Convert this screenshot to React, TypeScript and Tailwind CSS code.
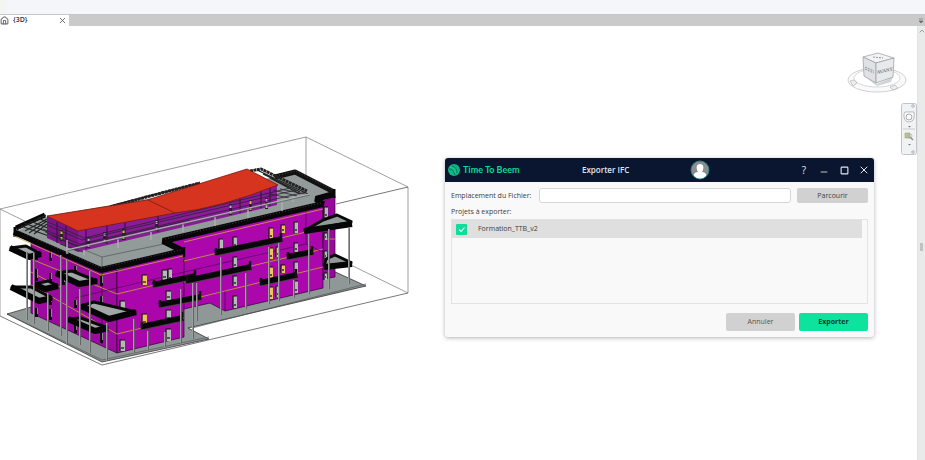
import { ChevronUp, House, Minus, Square, X } from "lucide-react";

const windowButton = "flex h-4 w-5 items-center justify-center text-gray-200";

// left, front, right and back corners of each corner balcony
const cornerBalconies = [
  "10,248 29,257 41,254 26,246",
  "11,287 39,301 52,298 31,287",
  "34,284 45,289 58,286 48,281",
  "56,273 79,284 97,281 72,271",
  "68,319 95,331 108,328 81,318",
  "81,306 109,319 136,312 94,302",
];

// railings on the far right corner
const sideRailings = [
  ["304,231 323,220 337,215 352,222", "304,231 352,224"],
  ["324,266 326,259 335,255 352,263", "324,267 352,264"],
];

// straight balconies on the long facade
const facadeBalconies = [
  [153, 285, 196, 276],
  [159, 305, 201, 297],
  [141, 327, 183, 318],
  [215, 253, 282, 239],
  [186, 281, 251, 267],
  [260, 283, 297, 275],
  [287, 257, 313, 252],
];

const columns = [
  [27, 249, 320], [34, 250, 324], [48, 290, 331], [61, 252, 336], [67, 256, 344],
  [80, 286, 345], [90, 268, 353], [107, 320, 361], [134, 316, 353], [148, 328, 350],
  [165, 329, 347], [181, 286, 343], [193, 280, 339], [197, 280, 321], [221, 254, 315],
  [246, 270, 309], [269, 244, 304], [279, 240, 301], [294, 277, 298], [309, 231, 294],
  [329, 226, 289], [349, 225, 284],
];

const windows = [
  [142, 275, 5, 10, "y"], [120, 301, 5, 12, "g"], [142, 314, 5, 11, "y"], [120, 340, 5, 11, "g"],
  [162, 270, 5, 10, "g"], [168, 269, 4, 12, "g"], [166, 291, 5, 9, "g"], [166, 310, 5, 11, "g"],
  [166, 329, 5, 12, "g"], [219, 239, 4, 13, "g"], [233, 237, 4, 11, "g"], [233, 257, 4, 11, "g"],
  [233, 276, 4, 10, "g"], [233, 296, 4, 12, "g"], [269, 228, 4, 11, "y"], [281, 225, 4, 8, "y"],
  [294, 222, 4, 11, "g"], [269, 248, 4, 11, "y"], [276, 247, 3, 10, "y"], [294, 243, 4, 9, "g"],
  [269, 267, 4, 11, "y"], [281, 265, 4, 8, "y"], [294, 262, 4, 11, "g"], [269, 287, 4, 12, "y"],
  [276, 286, 3, 11, "g"], [294, 281, 4, 12, "g"], [324, 207, 4, 11, "g"], [324, 233, 3, 7, "g"],
  [324, 251, 3, 8, "g"], [324, 273, 3, 7, "g"],
];

const sideWindows = [
  [35, 250, 10], [49, 252, 9], [35, 269, 12], [49, 273, 9], [49, 295, 10], [35, 308, 9],
  [49, 309, 11], [62, 276, 9], [74, 300, 8], [74, 324, 9], [100, 276, 10], [100, 296, 9],
  [100, 333, 10], [74, 266, 7],
];

const roofWindows = [
  [60, 230], [87, 237], [103, 232], [122, 229], [155, 220], [229, 204], [249, 200], [265, 198],
];

function Building() {
  return (
    <svg
      viewBox="0 132 412 238"
      className="block w-[412px] shrink-0"
      fill="none"
      role="img"
      aria-label="3D"
    >
      {/* back of the section box */}
      <path d="M0 209 306 137 408 187V293M306 137V243L408 293M0 209V316M0 209 102 259" stroke="#777" strokeWidth=".7" />

      {/* ground slab */}
      <path d="M7 314 102 362 209 339 188 328 366 286 320 265 90 290Z" fill="#8f9797" stroke="#222" strokeWidth=".7" />
      <path d="M7 314 102 360 209 337M192 328 366 284" stroke="#555" strokeWidth=".7" />

      {/* walls */}
      <path d="M31 236 117 270V353L31 313Z" fill="#9c0a9f" stroke="#300033" strokeWidth=".7" />
      <path d="M117 270 184 250V337L117 353Z" fill="#aa06ac" stroke="#300033" strokeWidth=".7" />
      <path d="M162 242 323 202V288L225 311 210 303 184 309V252Z" fill="#ab07ad" stroke="#300033" strokeWidth=".7" />
      <path d="M323 201 335 196V277L323 279Z" fill="#99089d" stroke="#300033" strokeWidth=".7" />
      <path d="M225 311V290M306 209V244M102 273V344" stroke="#46004a" strokeWidth=".7" />

      {/* floor lines */}
      <path
        d="M31 259 117 294 184 278M31 285 117 334 184 318M31 272 60 287M184 261 323 228M184 282 323 249M184 301 323 267M323 239H335M323 263 335 260"
        stroke="#b98b42"
        strokeWidth="1"
      />
      <path d="M75 298 184 272 306 244 335 258" stroke="#46004a" strokeWidth=".6" />

      {sideWindows.map(([x, y, h]) => (
        <g key={`${x}-${y}`}>
          <rect x={x} y={y} width="3" height={h} fill="#160018" />
          <path d={`M${x + 2.5} ${y}v${h - 3}`} stroke="#a1a8a4" strokeWidth=".8" />
        </g>
      ))}
      {windows.map(([x, y, w, h, tone]) => (
        <g key={`${x}-${y}`}>
          <rect x={x} y={y} width={w} height={h} fill={tone === "y" ? "#efc35b" : "#b3bbb7"} />
          <path d={`M${x} ${Number(y) + Number(h)}V${y}H${Number(x) + Number(w)}`} stroke="#180019" strokeWidth="1.2" />
          <path d={`M${Number(x) + 1} ${Number(y) + Number(h) - 3}h${Number(w) - 2}`} stroke="#292929" strokeWidth="1.4" />
        </g>
      ))}

      {/* roof terrace and parapet */}
      <path d="M17 231 100 270 183 250 162 242 322 201 333 193 294 174 48 216Z" fill="#929b9a" />
      <path d="M102 257 178 241M102 257V268M70 244 102 257" stroke="#555" strokeWidth=".7" />
      <path d="M16 228 45 215" stroke="#070707" strokeWidth="5" />
      <path d="M14 232 101 270 183 251 163 241 323 204 316 199 334 194" stroke="#070707" strokeWidth="6" strokeLinejoin="bevel" />
      <path d="M15 227V237" stroke="#070707" strokeWidth="3" />
      <path d="M184 247V257" stroke="#070707" strokeWidth="2.5" />
      <path d="M275 177 295 172 334 192" stroke="#111" strokeWidth="5" strokeLinejoin="bevel" />
      <path d="M334 189V198" stroke="#080808" strokeWidth="3" />
      <path d="M14 236 101 275 183 256M184 242 323 209" stroke="#c9a83d" strokeWidth=".8" />
      <path d="M16 230 101 268 181 250M165 239 321 203M276 176 295 171 333 190" stroke="#666" strokeWidth=".6" strokeDasharray="1 2" />

      {/* truss behind the roof */}
      <path d="M18 229 46 215M25 231 47 219M21 226 60 240M30 221 68 236M38 218 54 225M24 223 64 238M34 234 47 224M29 233 47 221M110 206 200 183M257 170 308 194M263 174 300 192M270 178 300 194" stroke="#222" strokeWidth="1.3" />
      <path d="M114 206 150 196 200 183M250 171 261 169 307 191" stroke="#222" strokeWidth="3" strokeDasharray="3 .5" />

      {/* top storey */}
      <path d="M47 216 78 230V252L47 238Z" fill="#7d1389" />
      <path d="M78 230 277 185V205L78 252Z" fill="#8b1b98" />
      <path d="M57 222V243M66 226V247M86 230V249M107 225V244M125 221V240M158 214V232M240 193V213M261 189V208M270 187V206" stroke="#3a0742" strokeWidth="1" />
      {roofWindows.map(([x, y]) => (
        <g key={x}>
          <rect x={x} y={y} width="3" height="11" fill="#252125" />
          <path d={`M${x + 1.5} ${y + 1}v3m0 3v3`} stroke={x === 122 || x === 249 || x === 60 ? "#e4b94d" : "#b4beb9"} strokeWidth="2" />
        </g>
      ))}

      {/* pergola */}
      <path
        d="M43 229 80 244 306 192M45 232 80 247M47 225 82 240 296 190M48 222 84 238 290 188M52 236 76 246 190 220M60 244 83 252M280 189 305 194M273 190 297 196M265 193 289 198"
        stroke="#282331"
        strokeWidth=".8"
      />
      <path d="M67 250 310 194M84 250V255M118 239V248M151 232V240M183 224V232M215 217V226M248 209V218M282 201V211M293 196V202M67 240V254" stroke="#a9b0ad" strokeWidth="1.5" />
      <path d="M67 251 310 195" stroke="#44464a" strokeWidth=".6" />

      {/* red roof */}
      <path d="M47 216 147 200 247 169 278 185Q220 208 175 213L78 231Z" fill="#d6341f" stroke="#721910" strokeWidth=".8" />
      <path d="M148 200 175 213" stroke="#6a2015" strokeWidth=".8" />

      {cornerBalconies.map((points) => (
        <g key={points}>
          <polygon points={points} fill="#a0a7a4" stroke="#090909" strokeWidth="3" strokeLinejoin="bevel" />
          <polyline points={points.split(" ").slice(0, 3).join(" ")} stroke="#050505" strokeWidth="6" strokeLinejoin="bevel" />
        </g>
      ))}
      {sideRailings.map(([rear, front]) => (
        <g key={rear}>
          <polygon points={rear} fill="#929b9a" stroke="#080808" strokeWidth="3" strokeLinejoin="bevel" />
          <polyline points={front} stroke="#060606" strokeWidth="6" />
        </g>
      ))}
      {facadeBalconies.map(([x1, y1, x2, y2]) => (
        <g key={`${x1}-${y1}`}>
          <path d={`M${x1} ${y1}L${x2} ${y2}`} stroke="#070707" strokeWidth="6" />
          <path d={`M${x1 + 1} ${y1 - 5}V${y1 + 2}M${x2 - 1} ${y2 - 6}V${y2 + 2}`} stroke="#111" strokeWidth="2.5" />
          <path d={`M${x1} ${y1 + 3}L${x2} ${y2 + 3}`} stroke="#555" strokeWidth=".7" />
        </g>
      ))}

      {columns.map(([x, top, bottom]) => (
        <g key={x}>
          <path d={`M${x} ${top + 3}V${bottom}`} stroke="#4c4c4c" strokeWidth="1.8" />
          <path d={`M${x - 0.3} ${top + 3}V${bottom}`} stroke="#adb2b0" strokeWidth="1" />
        </g>
      ))}

      {/* front of the section box */}
      <path d="M0 316 102 365 408 293M408 187 336 204" stroke="#555" strokeWidth=".8" />
    </svg>
  );
}

function ViewCube() {
  return (
    <svg viewBox="0 0 64 46" className="h-[46px] w-16" fill="none">
      <ellipse cx="31" cy="31" rx="29" ry="12" fill="#fafafa" stroke="#cfd1d3" strokeWidth="1" />
      <ellipse cx="31" cy="29" rx="23" ry="9" fill="#fff" stroke="#d7d9da" strokeWidth="1" />
      <path d="M19 28 31 35 47 28 45 33 31 37Z" fill="#d2d4d5" />
      <path d="M17 8 32 4 48 9 30 14Z" fill="#f2f3f4" stroke="#a3a6a8" strokeWidth=".8" />
      <path d="M17 8 30 14V34L18 27Z" fill="#dfe2e4" stroke="#a0a3a5" strokeWidth=".8" />
      <path d="M30 14 48 9 47 28 30 34Z" fill="#e7eaec" stroke="#a0a3a5" strokeWidth=".8" />
      <text x="31" y="25" fontSize="5" fontWeight="700" fill="#7d8285" fontFamily="Liberation Serif, serif" transform="rotate(-12 31 25)">AVANT</text>
      <path d="M19 18 28 22M19 20 28 24M27 8 37 9" stroke="#989c9f" strokeWidth="1.1" strokeDasharray="2 1" />
      <path d="M4 32 8 31 11 34 7 37ZM44 38 49 36 52 39 47 41Z" fill="#eee" stroke="#bbb" strokeWidth=".8" />
    </svg>
  );
}

function NavigationBar() {
  return (
    <svg viewBox="0 0 16 52" className="h-[52px] w-4" fill="none">
      <rect x=".5" y=".5" width="15" height="51" rx="2" fill="#f1f2f3" stroke="#c3c6c8" />
      <circle cx="12" cy="3" r="1.3" stroke="#999" strokeWidth=".7" />
      <path d="M4 9H13V15Q12 19 8 19T3 14V11Z" fill="#fff" stroke="#a5aaad" strokeWidth=".8" />
      <circle cx="8" cy="14" r="3" stroke="#9aa0a3" strokeWidth=".9" />
      <path d="M7 23H10L8.500 24.500ZM7 41H10L8.500 42.500Z" fill="#777" />
      <path d="M2 26H14" stroke="#ccc" />
      <path d="M4 30H9V35H4Z" fill="#b8c590" stroke="#98a66b" strokeWidth=".6" />
      <path d="M9 34 12 37" stroke="#888" strokeWidth="1.3" />
      <circle cx="9" cy="33" r="2" stroke="#aaa" strokeWidth=".7" />
      <circle cx="12" cy="49" r="1.3" stroke="#999" strokeWidth=".7" />
    </svg>
  );
}

function BeemLogo() {
  return (
    <svg viewBox="0 0 12 12" className="size-3 shrink-0" fill="none">
      <circle cx="6" cy="6" r="6" fill="#0fb485" />
      <path d="M1 5Q5 4 7 11M4 2Q9 3 9 9" stroke="#08745b" strokeWidth=".9" />
      <path d="M2 3Q6 3 8 9" stroke="#21d99c" strokeWidth=".7" />
    </svg>
  );
}

function Avatar() {
  return (
    <svg viewBox="0 0 20 20" className="size-5" fill="none">
      <circle cx="10" cy="10" r="9" fill="#8b8e90" stroke="#20877b" />
      <path d="M3.500 15Q5 12 8 12L7 10Q5.500 4 10 4T13 10L12 12Q15 12 16.500 15Q14 18.500 10 18.500T3.500 15Z" fill="#fff" />
    </svg>
  );
}

function ExportDialog() {
  return (
    <section
      aria-label="Exporter IFC"
      className="overflow-hidden rounded-[3px] bg-[#f9f9f9] text-[7px] leading-[10px] text-[#3c3c3c] shadow-[0_1px_4px_rgba(0,0,0,0.3)]"
    >
      <header className="grid h-6 grid-cols-[134px_108px_1fr] items-center bg-[#0a1530] pl-[3px]">
        <div className="flex items-center gap-[3px] font-['Lato',sans-serif] text-[9px] font-bold text-[#14d795]">
          <BeemLogo />
          Time To Beem
        </div>
        <h1 className="text-[8px] font-semibold text-gray-200">Exporter IFC</h1>
        <div className="flex items-center justify-between">
          <Avatar />
          <div className="flex">
            <button aria-label="Aide" className={`${windowButton} text-[10px]`}>?</button>
            <button aria-label="Réduire" className={windowButton}><Minus size={10} className="mt-1" /></button>
            <button aria-label="Agrandir" className={windowButton}><Square size={9} strokeWidth={3} /></button>
            <button aria-label="Fermer" className={windowButton}><X size={12} /></button>
          </div>
        </div>
      </header>

      <div className="px-[6px] pt-[6px] pb-[6px]">
        <div className="flex items-center gap-[6px]">
          <label htmlFor="path" className="pr-[2px]">Emplacement du Fichier:</label>
          <input id="path" className="h-[15px] min-w-0 flex-1 rounded-[3px] border border-[#d5d5d5] bg-white px-1 outline-none" />
          <button className="h-[15px] w-[71px] rounded-[2px] bg-[#d1d1d1] text-[#444]">Parcourir</button>
        </div>

        <h2 className="mt-1 mb-[2px]">Projets à exporter:</h2>
        <div className="h-[85px] border border-[#e3e3e3]">
          <label className="mr-[5px] flex h-[18px] items-center gap-[11px] bg-[#dfdfdf] pl-1">
            <span className="grid size-[11px]">
              <input type="checkbox" defaultChecked className="col-start-1 row-start-1 size-[11px] appearance-none rounded-[1px] bg-[#12dc9a]" />
              <svg viewBox="0 0 11 11" className="pointer-events-none col-start-1 row-start-1 size-[11px]" fill="none">
                <path d="M3 5.500 5 7.500 8.500 3.500" stroke="#fff" strokeWidth="1.1" />
              </svg>
            </span>
            Formation_TTB_v2
          </label>
        </div>

        <div className="mt-[9px] flex justify-end gap-1">
          <button className="h-[18px] w-[69px] rounded-[2px] bg-[#d1d1d1] text-[#555]">Annuler</button>
          <button className="h-[18px] w-[69px] rounded-[2px] bg-[#0ee39d] font-bold text-[#07382b]">Exporter</button>
        </div>
      </div>
    </section>
  );
}

export default function App() {
  return (
    <div className="flex h-screen flex-col overflow-hidden bg-white font-['Open_Sans','Noto_Sans',sans-serif]">
      <div className="h-[14px] shrink-0 bg-[#f5f6fa]">
        <div className="h-full w-[6px] bg-[#f2f5f2]" />
      </div>
      <nav className="flex h-3 shrink-0 items-center justify-between border-t border-[#c7c7c7] bg-[#cacaca]">
        <div className="flex h-full w-[69px] items-center bg-white text-[7px] font-semibold text-[#333]">
          <House size={9} strokeWidth={3} className="mr-1 text-[#777]" />
          <span className="flex-1">{"{3D}"}</span>
          <button aria-label="Fermer la vue" className="mr-[2px]"><X size={9} className="text-[#444]" /></button>
        </div>
        <button aria-label="Liste des vues" className="mr-px">
          <svg viewBox="0 0 6 6" className="size-[6px]"><path d="M1 1H5M1 3H5L3 5Z" fill="#666" stroke="#666" strokeWidth=".6" /></svg>
        </button>
      </nav>

      <main className="flex min-h-0 flex-1">
        <div className="relative min-w-0 flex-1">
          <div className="pt-[106px]">
            <Building />
          </div>
          <div className="absolute top-[23px] right-[7px]"><ViewCube /></div>
          <div className="absolute top-[77px] right-0"><NavigationBar /></div>
          <div className="absolute top-[132px] right-[43px] w-[429px]"><ExportDialog /></div>
        </div>
        <div className="flex w-2 shrink-0 flex-col items-center border-l border-[#e3e3e3] bg-[#e9eaea]">
          <ChevronUp size={8} className="mt-px text-[#777]" />
          <span className="mt-[208px] h-2 w-[3px] bg-[#bfc1c2]" />
        </div>
      </main>
    </div>
  );
}
